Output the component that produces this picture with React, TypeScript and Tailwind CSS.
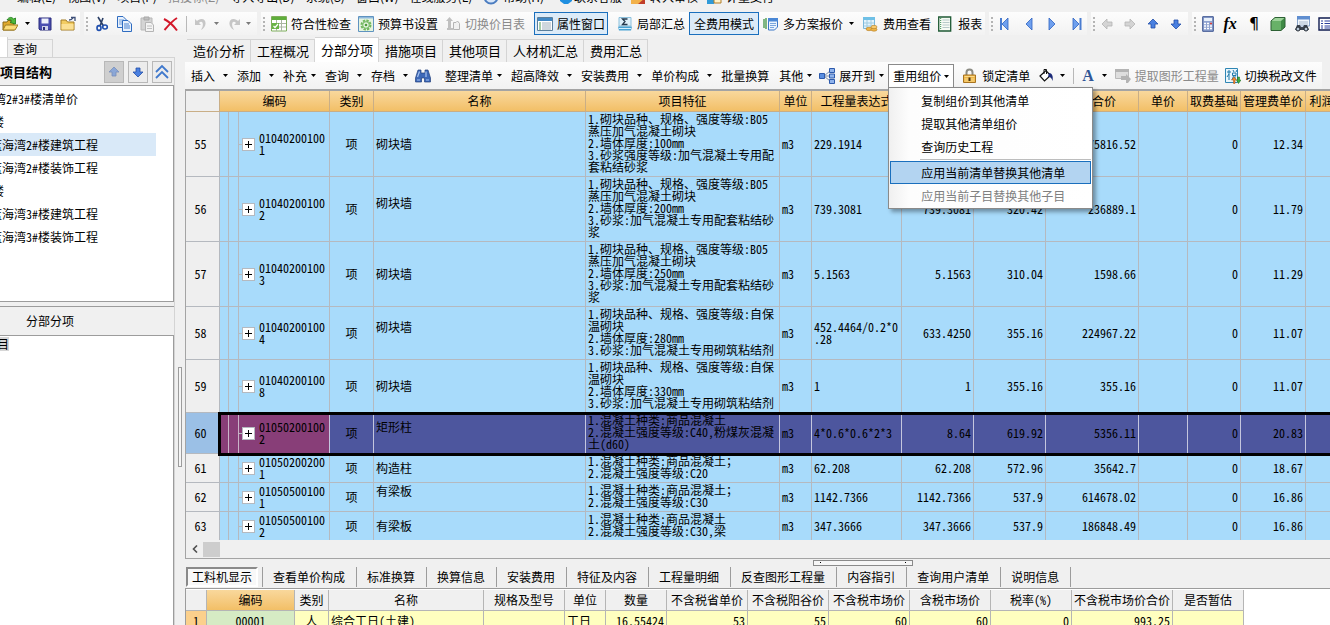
import type { ReactNode } from 'react';
import clsx from 'clsx';

// ---------- icons ----------

const Svg = ({ children, w = 16 }: { children: ReactNode; w?: number }) => (
  <svg width={w} height={16} viewBox={`0 0 ${w} 16`} className="shrink-0" fill="none" aria-hidden="true">
    {children}
  </svg>
);

const Caret = ({ dim = false }: { dim?: boolean }) => (
  <svg width="5" height="3" viewBox="0 0 5 3" className="shrink-0" aria-hidden="true">
    <path d="M0 0H5L2.500 3Z" fill={dim ? '#7a7a7a' : '#000'} />
  </svg>
);

const OpenIcon = () => (
  <Svg>
    <path d="M1 14V6H5L6 4.500H9V6H12V14Z" fill="#e0a92c" stroke="#8a6a18" />
    <path d="M1 14L3.500 9H16L13 14Z" fill="#fbdc78" stroke="#a07c20" />
    <path d="M5 4C6.500 1 10 0.500 11.500 3L13.500 2V8L8 6.500L9.800 5C9 3.500 7 3.500 5 4Z" fill="#4fb83c" stroke="#1d7a18" strokeWidth=".8" />
  </Svg>
);
const SaveIcon = () => (
  <Svg>
    <path d="M2 2H14V14H3L2 13Z" fill="#4a4fb0" stroke="#2a2c7c" />
    <path d="M4.500 2.500H11.500V7.500H4.500Z" fill="#eef1fa" />
    <path d="M5 10H11V14H5Z" fill="#cfd3e8" />
    <path d="M6 11H8V14H6Z" fill="#2a2c7c" />
  </Svg>
);
const FolderIcon = () => (
  <Svg>
    <path d="M1 14V4H6L7.500 6H14V14Z" fill="#f2cc62" stroke="#a37c26" />
    <path d="M1.500 8H13.500V13.500H1.500Z" fill="#fbe094" />
    <path d="M9 4C11 4 12 3.500 13 2M11 1.500H15V5" stroke="#3c4e78" strokeWidth="1.300" />
  </Svg>
);
const CutIcon = () => (
  <Svg>
    <path d="M4 1L9.500 10M9 2L6 10" stroke="#2b3f66" strokeWidth="1.600" />
    <ellipse cx="5" cy="12" rx="2" ry="2.400" stroke="#1f4fae" strokeWidth="1.600" />
    <ellipse cx="11" cy="11" rx="2.300" ry="2" stroke="#1f4fae" strokeWidth="1.600" />
  </Svg>
);
const CopyIcon = () => (
  <Svg>
    <path d="M.5 .5H6L9.500 4V11.500H.5Z" fill="#e8f1fc" stroke="#2f6cc0" />
    <path d="M2 4H7M2 6H7M2 8H7" stroke="#6e9ddb" />
    <path d="M5.500 4.500H11L14.500 8V15.500H5.500Z" fill="#e8f1fc" stroke="#2f6cc0" />
    <path d="M7 8H12M7 10H13M7 12H13" stroke="#4a83d0" />
  </Svg>
);
const PasteIcon = () => (
  <Svg>
    <path d="M1 2H12V14H1Z" fill="#d4d4d4" stroke="#b8b8b8" />
    <path d="M4 1H9V4H4Z" fill="#c0c0c0" stroke="#a8a8a8" />
    <path d="M5.500 6.500H11L13.500 9V15.500H5.500Z" fill="#f3f3f3" stroke="#b4b4b4" />
    <path d="M7 10H12M7 12.500H12" stroke="#c0c0c0" />
  </Svg>
);
const DeleteIcon = () => (
  <Svg>
    <path d="M1 3C5 5 10 9 14 14.500M14 2C9 5 5 10 1.500 14" stroke="#d3182a" strokeWidth="2" />
  </Svg>
);
const UndoIcon = () => (
  <Svg>
    <path d="M1 3V9H7L5 7C7 4.500 10 6 8.500 11L7 14C13 11 13 3 7.500 3C5.500 3 4 4 3 5Z" fill="#c6c6c6" />
  </Svg>
);
const RedoIcon = () => (
  <Svg>
    <path d="M14 3V9H8L10 7C8 4.500 5 6 6.500 11L8 14C2 11 2 3 7.500 3C9.500 3 11 4 12 5Z" fill="#c6c6c6" />
  </Svg>
);
const CheckGridIcon = () => (
  <Svg>
    <path d="M.5 .5H15.500V15H.5Z" fill="#fff" stroke="#7fae5c" />
    <path d="M1 1H15V4H1Z" fill="#5fae3c" />
    <path d="M5.500 4V15M10.500 4V15M1 7.500H15M1 11H15" stroke="#a9b5a2" />
    <path d="M1 7H8V13H1Z" fill="#69b345" />
    <path d="M2.500 10L4 11.500L7 8" stroke="#fff" strokeWidth="1.200" />
  </Svg>
);
const GearPageIcon = () => (
  <Svg>
    <path d="M.5 .5H15.500V15.500H.5Z" fill="#e4f3e0" stroke="#5f93c0" />
    <path d="M1 1H15V2.500H1Z" fill="#8fb8dc" />
    <circle cx="8" cy="9" r="4.500" stroke="#6fb65c" strokeWidth="2" strokeDasharray="2.400 1.100" />
    <circle cx="8" cy="9" r="3.300" stroke="#6fb65c" />
    <circle cx="8" cy="9" r="1.300" fill="#4e9c3c" />
  </Svg>
);
const SwitchIcon = () => (
  <Svg>
    <path d="M4.500 1L8 5H6V12H8V14H2V12H3V5H1Z" fill="#c0c0c0" />
    <path d="M8.500 6.500H11L12.500 5L14.500 7.500V13.500H8.500Z" fill="#f0f0f0" stroke="#b4b4b4" />
  </Svg>
);
const WindowIcon = () => (
  <Svg>
    <path d="M.5 1.500H15.500V14.500H.5Z" fill="#fff" stroke="#5a7f9c" />
    <path d="M1 2H15V5H1Z" fill="#3f87c4" />
    <path d="M2 7H4M2 9H4M2 11H4M2 13H4" stroke="#4f9c54" />
    <path d="M5 7H14M5 9H14M5 11H14M5 13H14" stroke="#9fb0bc" />
  </Svg>
);
const SumIcon = () => (
  <Svg>
    <path d="M2 1.500H14V10H2Z" fill="#dff0fa" stroke="#8cc0dc" />
    <path d="M10.500 3H5.500L8 5.500L5.500 8.500H10.500" stroke="#24384c" strokeWidth="1.300" />
    <path d="M1 10.500H15L14 14.500H2Z" fill="#4aa3d4" />
    <path d="M2 12.500H14" stroke="#d6f0ff" />
  </Svg>
);
const MultiIcon = () => (
  <Svg>
    <path d="M1 3V12M3 2V13" stroke="#4c9b52" strokeWidth="1.400" />
    <path d="M5.500 2.500H14.500V11L11.500 14H5.500Z" fill="#eaf3fd" stroke="#3b76c6" />
    <path d="M5 2H15V5.500H5Z" fill="#4b88d6" />
    <path d="M7 7.500H13M7 9.500H13M7 11.500H11" stroke="#79a6de" />
  </Svg>
);
const FeeIcon = () => (
  <Svg>
    <path d="M.5 1.500H11.500V12.500H.5Z" fill="#e3f3fc" stroke="#7cb9dc" />
    <path d="M0 1H12V4H0Z" fill="#6fc0e6" />
    <path d="M4 4V12M8 4V12M1 7H11M1 10H11" stroke="#9fcbe2" />
    <ellipse cx="6" cy="13" rx="3" ry="1.700" fill="#efb548" stroke="#b57c20" strokeWidth=".6" />
    <ellipse cx="11" cy="13.500" rx="3" ry="1.700" fill="#efb548" stroke="#b57c20" strokeWidth=".6" />
    <ellipse cx="11" cy="11" rx="3" ry="1.700" fill="#f7cb70" stroke="#b57c20" strokeWidth=".6" />
  </Svg>
);
const ReportIcon = () => (
  <Svg>
    <path d="M.7 1H12.700V15H.7Z" fill="#f6fbf4" stroke="#1f5a34" strokeWidth="1.300" />
    <path d="M2.700 2V14" stroke="#2f8a4a" strokeDasharray="1 1" />
    <path d="M4.500 4H11.500M4.500 6.500H11.500M4.500 9H11.500M4.500 11.500H11.500" stroke="#b7c9c9" />
  </Svg>
);
const NavIcon = ({ kind }: { kind: 'first' | 'prev' | 'next' | 'last' }) => (
  <Svg w={12}>
    {(kind === 'prev' || kind === 'first') && <path d="M9 2V14L3 8Z" fill="#6fa0ee" stroke="#2d62c0" strokeWidth=".8" />}
    {(kind === 'next' || kind === 'last') && <path d="M2 2V14L8 8Z" fill="#6fa0ee" stroke="#2d62c0" strokeWidth=".8" />}
    {kind === 'first' && <path d="M2 2V14" stroke="#4a7cd0" strokeWidth="2" />}
    {kind === 'last' && <path d="M9.500 2V14" stroke="#4a7cd0" strokeWidth="2" />}
  </Svg>
);
const arrowPaths = {
  left: 'M1 8L6 3V6H11V10H6V13Z',
  right: 'M11 8L6 3V6H1V10H6V13Z',
  up: 'M6 3L11 8H8V12H4V8H1Z',
  down: 'M6 13L11 8H8V4H4V8H1Z',
};
const ArrowIcon = ({ dir, dim = false }: { dir: keyof typeof arrowPaths; dim?: boolean }) => (
  <Svg w={12}>
    <path d={arrowPaths[dir]} fill={dim ? '#d4d4d4' : '#4a80e0'} stroke={dim ? '#b4b4b4' : '#234fa8'} strokeWidth=".8" />
  </Svg>
);
const CalcIcon = () => (
  <Svg w={12}>
    <path d="M.7 .7H11.300V15.300H.7Z" fill="#8fa3d0" stroke="#3d5490" />
    <path d="M2 2H10V5H2Z" fill="#e8f0fa" />
    <path d="M2 7.500H10M2 10H10M2 12.500H10" stroke="#fff" strokeWidth="1.400" strokeDasharray="2 1" />
    <path d="M8 7.500H10" stroke="#d8403a" strokeWidth="1.400" />
  </Svg>
);
const CubeIcon = () => (
  <Svg>
    <path d="M1 5L5 1.500H15V11L11 14.500H1Z" fill="#3f8a45" />
    <path d="M1 5L5 1.500H15L11 5Z" fill="#9ed39b" />
    <path d="M1 5H11V14.500H1Z" fill="#68b168" />
    <path d="M1 5L5 1.500H15V11L11 14.500H1Z" stroke="#2d6134" />
  </Svg>
);
const FindTableIcon = () => (
  <Svg>
    <path d="M3.500 .5H15.500V10H3.500Z" fill="#f2f6fb" stroke="#8aa4c8" />
    <path d="M3 0H16V3.500H3Z" fill="#5f8ed0" />
    <path d="M5 6H14M5 8H14" stroke="#a8b8cc" />
    <path d="M1 14L3 9H6L7 11H9L10 9H13L15 14Z" fill="#3c4450" />
    <circle cx="4" cy="13" r="2" fill="#b8c6d6" stroke="#20262e" />
    <circle cx="12" cy="13" r="2" fill="#b8c6d6" stroke="#20262e" />
  </Svg>
);
const ListIcon = () => (
  <Svg>
    <path d="M1 2H15V14H1Z" fill="#fff" stroke="#101c50" strokeWidth="1.400" />
    <path d="M3 5H5M3 7.500H5M3 10H5M3 12H5M6.500 5H14M6.500 7.500H14M6.500 10H14M6.500 12H14" stroke="#2a3f9c" />
  </Svg>
);
const BinocularsIcon = () => (
  <Svg>
    <path d="M3 2H6V5H10V2H13L15.500 10V14H9.500V10H6.500V14H.5V10Z" fill="#3d68b8" stroke="#24407c" strokeWidth=".7" />
    <path d="M2.500 9L4.500 3.500M11 9V3.500" stroke="#a8c4f0" strokeWidth="1.200" />
    <path d="M2 12H5M11 12H14" stroke="#a8c4f0" />
  </Svg>
);
const TreeIcon = () => (
  <Svg>
    <path d="M5 8L11 3M5 8L11 8M5 8L11 13" stroke="#7f8fa8" />
    <path d="M.5 5.500H5.500V10.500H.5Z" fill="#5a8ee0" stroke="#2d5aac" />
    <path d="M10.500 .5H15.500V4.500H10.500ZM10.500 6H15.500V10H10.500ZM10.500 11.500H15.500V15.500H10.500Z" fill="#8fb3ec" stroke="#2d5aac" />
  </Svg>
);
const LockIcon = () => (
  <Svg>
    <path d="M4.500 8V4.500C4.500 0.500 10.500 0.500 10.500 4.500V8" stroke="#8c8c84" strokeWidth="2" />
    <path d="M1.500 7H13.500V14.500H1.500Z" fill="#eeb548" stroke="#a87420" />
    <path d="M2.500 8.500H12.500M2.500 11H12.500M2.500 13H12.500" stroke="#fbdc8c" />
    <path d="M6.500 9.500H8.500V13H6.500Z" fill="#4c3510" />
  </Svg>
);
const BucketIcon = () => (
  <Svg>
    <path d="M2 8L8 2.500L12.500 7.500L6.500 13Z" fill="#fff" stroke="#111" strokeWidth="1.200" />
    <path d="M6 6V1.500H8.500V6" stroke="#111" />
    <path d="M11 5C14 5 15.500 8 14.500 13C13.500 10 13 9 10 9Z" fill="#1c2a78" />
  </Svg>
);
const ExtractIcon = () => (
  <Svg>
    <path d="M.5 1.500H13.500V10.500H.5Z" fill="#dedede" stroke="#bababa" />
    <path d="M0 1H14V4H0Z" fill="#b4b4b4" />
    <path d="M6 8H11V6L16 11L13 15H11V12H6Z" fill="#b4b4b4" />
  </Svg>
);
const TaxIcon = () => (
  <Svg>
    <path d="M.5 .5H12.500V14.500H.5Z" fill="#eaf6fc" stroke="#2f86b4" />
    <path d="M2 4H6M4 2V12M4 6L2 9M8 2L9 4M12 2L11 4M7.500 5H11V7.500H7.500ZM8.500 8L7 12M10 8V11" stroke="#1f78a8" />
    <path d="M8.500 15.500V12H6.500L9 9L11.500 12H10V15.500Z" fill="#f08a2c" stroke="#a8480c" strokeWidth=".5" />
    <path d="M12.500 9H14.500V12H16L13.500 15.500L11.500 12H12.500Z" fill="#3cae3c" stroke="#186418" strokeWidth=".5" />
  </Svg>
);
const ChevronsUp = () => (
  <Svg>
    <path d="M2 8L8 2L14 8M2 14L8 8L14 14" stroke="#3f78cc" strokeWidth="1.800" />
  </Svg>
);

// ---------- toolbar bits ----------

const strip = 'flex items-center bg-linear-to-b from-[#fdfdfd] to-[#f2f2f2]';

const Grip = () => (
  <span className="mx-[2px] flex shrink-0 flex-col gap-[2px]">
    {[0, 1, 2, 3].map(n => <i key={n} className="h-[2px] w-[2px] bg-[#b4b4b4]" />)}
  </span>
);

const Sep = () => <span className="h-4 w-px shrink-0 bg-[#b8b8b8]" />;

type ToolProps = { icon?: ReactNode; label: string; active?: boolean; disabled?: boolean; caret?: boolean };

const Tool = ({ icon, label, active, disabled, caret }: ToolProps) => (
  <button
    type="button"
    disabled={disabled}
    className={clsx(
      'flex h-[23px] shrink-0 items-center gap-1 border',
      icon ? 'px-[2px]' : 'px-1',
      active ? 'border-[#1a6fbd] bg-[#dcebf8]' : 'border-transparent',
      disabled && 'text-[#8a8a8a]',
    )}
  >
    {icon}
    <span>{label}</span>
    {caret && <span className="px-[2px]"><Caret /></span>}
  </button>
);

const IconBtn = ({ title, children, disabled }: { title: string; children: ReactNode; disabled?: boolean }) => (
  <button type="button" title={title} aria-label={title} disabled={disabled} className="flex shrink-0 items-center">
    {children}
  </button>
);

const MenuTool = ({ label, wide }: { label: string; wide?: boolean }) => (
  <button type="button" className={clsx('flex shrink-0 items-center pr-[9px]', wide ? 'gap-2' : 'gap-1')}>
    {label}
    <Caret />
  </button>
);

// ---------- data ----------

const menus = ['编辑(E)', '视图(V)', '项目(P)', '招投标(Z)', '导入导出(D)', '系统(S)', '窗口(W)', '在线服务(L)'];

type Item = {
  no: number; code: string; name: string; raised?: boolean; spec: string;
  expr: string; qty: string; price: string; total: string; fee: string;
};

const items: Item[] = [
  { no: 55, code: '010402001001', name: '砌块墙', spec: '1.砌块品种、规格、强度等级:B05\n蒸压加气混凝土砌块\n2.墙体厚度:100mm\n3.砂浆强度等级:加气混凝土专用配\n套粘结砂浆', expr: '229.1914', qty: '229.1914', price: '330.8', total: '75816.52', fee: '12.34' },
  { no: 56, code: '010402001002', name: '砌块墙', raised: true, spec: '1.砌块品种、规格、强度等级:B05\n蒸压加气混凝土砌块\n2.墙体厚度:200mm\n3.砂浆:加气混凝土专用配套粘结砂\n浆', expr: '739.3081', qty: '739.3081', price: '320.42', total: '236889.1', fee: '11.79' },
  { no: 57, code: '010402001003', name: '砌块墙', spec: '1.砌块品种、规格、强度等级:B05\n蒸压加气混凝土砌块\n2.墙体厚度:250mm\n3.砂浆:加气混凝土专用配套粘结砂\n浆', expr: '5.1563', qty: '5.1563', price: '310.04', total: '1598.66', fee: '11.29' },
  { no: 58, code: '010402001004', name: '砌块墙', raised: true, spec: '1.砌块品种、规格、强度等级:自保\n温砌块\n2.墙体厚度:280mm\n3.砂浆:加气混凝土专用砌筑粘结剂', expr: '452.4464/0.2*0\n.28', qty: '633.4250', price: '355.16', total: '224967.22', fee: '11.07' },
  { no: 59, code: '010402001008', name: '砌块墙', spec: '1.砌块品种、规格、强度等级:自保\n温砌块\n2.墙体厚度:330mm\n3.砂浆:加气混凝土专用砌筑粘结剂', expr: '1', qty: '1', price: '355.16', total: '355.16', fee: '11.07' },
  { no: 60, code: '010502001002', name: '矩形柱', raised: true, spec: '1.混凝土种类:商品混凝土\n2.混凝土强度等级:C40,粉煤灰混凝\n土(d60)', expr: '4*0.6*0.6*2*3', qty: '8.64', price: '619.92', total: '5356.11', fee: '20.83' },
  { no: 61, code: '010502002001', name: '构造柱', spec: '1.混凝土种类:商品混凝土；\n2.混凝土强度等级:C20', expr: '62.208', qty: '62.208', price: '572.96', total: '35642.7', fee: '18.67' },
  { no: 62, code: '010505001001', name: '有梁板', raised: true, spec: '1.混凝土种类:商品混凝土；\n2.混凝土强度等级:C30', expr: '1142.7366', qty: '1142.7366', price: '537.9', total: '614678.02', fee: '16.86' },
  { no: 63, code: '010505001002', name: '有梁板', spec: '1.混凝土种类:商品混凝土\n2.混凝土强度等级:C30，梁', expr: '347.3666', qty: '347.3666', price: '537.9', total: '186848.49', fee: '16.86' },
];

const gridCols = [
  { label: '', w: 34 }, { label: '编码', w: 110 }, { label: '类别', w: 44 }, { label: '名称', w: 212 },
  { label: '项目特征', w: 194 }, { label: '单位', w: 32 }, { label: '工程量表达式', w: 90 }, { label: '工程量', w: 72 },
  { label: '综合单价', w: 72 }, { label: '综合合价', w: 93 }, { label: '单价', w: 49 }, { label: '取费基础', w: 53 },
  { label: '管理费单价', w: 65 }, { label: '利润单价', w: 56 },
];

const detailCols = [
  { label: '', w: 21, v: '1' }, { label: '编码', w: 88, v: '00001' }, { label: '类别', w: 34, v: '人' },
  { label: '名称', w: 155, v: '综合工日(土建)' }, { label: '规格及型号', w: 81, v: '' }, { label: '单位', w: 41, v: '工日' },
  { label: '数量', w: 61, v: '16.55424' }, { label: '不含税省单价', w: 81, v: '53' }, { label: '不含税阳谷价', w: 81, v: '55' },
  { label: '不含税市场价', w: 81, v: '60' }, { label: '含税市场价', w: 81, v: '60' }, { label: '税率(%)', w: 81, v: '0' },
  { label: '不含税市场价合价', w: 101, v: '993.25' }, { label: '是否暂估', w: 71, v: '' },
];

const mainTabs = ['造价分析', '工程概况', '分部分项', '措施项目', '其他项目', '人材机汇总', '费用汇总'];
const detailTabs = ['工料机显示', '查看单价构成', '标准换算', '换算信息', '安装费用', '特征及内容', '工程量明细', '反查图形工程量', '内容指引', '查询用户清单', '说明信息'];

// the tree is scrolled sideways, so every label is cut at its left end
const tree = [
  { label: '蓝海湾2#3#楼清单价', w: 'w-[78px]' },
  { label: '2#楼', w: 'w-[4px]' },
  { label: '蓝海湾2#楼建筑工程', w: 'w-[98px]', selected: true },
  { label: '蓝海湾2#楼装饰工程', w: 'w-[98px]' },
  { label: '3#楼', w: 'w-[4px]' },
  { label: '蓝海湾3#楼建筑工程', w: 'w-[98px]' },
  { label: '蓝海湾3#楼装饰工程', w: 'w-[98px]' },
];

// ---------- page parts ----------

const MenuBar = () => (
  <nav className="flex h-3 shrink-0 items-end overflow-hidden pb-[7px] pl-[17px] leading-4 whitespace-nowrap [font-feature-settings:normal]">
    {menus.map(m => (
      <a key={m} href="#" className={clsx('mr-[11px] shrink-0', m.startsWith('招') && 'text-[#8a8a8a]')}>{m}</a>
    ))}
    <a href="#" className="mr-[14px] flex shrink-0 gap-1">
      <Svg><circle cx="8" cy="8" r="6.500" fill="#d8e6f8" stroke="#4a7cc0" strokeWidth="2" /></Svg>帮助(H)
    </a>
    <a href="#" className="mr-2 flex shrink-0">
      <Svg><path d="M2 4H14V12L10 15H6L2 12Z" fill="#1f8fe0" /></Svg>联系客服
    </a>
    <a href="#" className="mr-2 flex shrink-0 gap-1">
      <Svg><path d="M1 4H15V15H1Z" fill="#f2b14a" /><path d="M8 15L15 9V15Z" fill="#c03c28" /></Svg>转入审核
    </a>
    <a href="#" className="flex shrink-0 gap-1">
      <Svg><path d="M1 4H8V15H1Z" fill="#2f9ad8" /><path d="M8 8H15V14H8Z" fill="#fff2c8" stroke="#b07c28" /></Svg>计量支付
    </a>
  </nav>
);

const TopToolbar = () => (
  <div className="flex h-[23px] shrink-0 gap-1 overflow-hidden whitespace-nowrap">
    <div className={clsx(strip, 'shrink-0 gap-[7px] pr-1 pl-[2px]')}>
      <button type="button" title="打开" className="flex items-center gap-[7px]"><OpenIcon /><Caret /></button>
      <IconBtn title="保存"><SaveIcon /></IconBtn>
      <IconBtn title="关闭工程"><FolderIcon /></IconBtn>
    </div>
    <div className={clsx(strip, 'shrink-0 gap-1 pr-[6px]')}>
      <Grip />
      <span className="flex items-center gap-[7px]">
        <IconBtn title="剪切"><CutIcon /></IconBtn>
        <IconBtn title="复制"><CopyIcon /></IconBtn>
        <IconBtn title="粘贴" disabled><PasteIcon /></IconBtn>
        <IconBtn title="删除"><DeleteIcon /></IconBtn>
        <Sep />
        <button type="button" title="撤销" disabled className="flex items-center gap-1"><UndoIcon /><Caret dim /></button>
        <button type="button" title="恢复" disabled className="flex items-center gap-1"><RedoIcon /><Caret dim /></button>
      </span>
    </div>
    <div className={clsx(strip, 'shrink-0 gap-px')}>
      <Grip />
      <Tool icon={<CheckGridIcon />} label="符合性检查" />
      <Tool icon={<GearPageIcon />} label="预算书设置" />
      <Tool icon={<SwitchIcon />} label="切换价目表" disabled />
      <span className="px-[2px]"><Sep /></span>
      <Tool icon={<WindowIcon />} label="属性窗口" active />
      <span className="px-[2px]"><Sep /></span>
      <Tool icon={<SumIcon />} label="局部汇总" />
      <Tool label="全费用模式" active />
      <Tool icon={<MultiIcon />} label="多方案报价" caret />
      <Tool icon={<FeeIcon />} label="费用查看" />
      <Tool icon={<ReportIcon />} label="报表" />
    </div>
    <div className={clsx(strip, 'shrink-0 gap-1 pr-1')}>
      <Grip />
      <span className="flex gap-3">
        <IconBtn title="第一条"><NavIcon kind="first" /></IconBtn>
        <IconBtn title="上一条"><NavIcon kind="prev" /></IconBtn>
        <IconBtn title="下一条"><NavIcon kind="next" /></IconBtn>
        <IconBtn title="最后一条"><NavIcon kind="last" /></IconBtn>
      </span>
    </div>
    <div className={clsx(strip, 'shrink-0 gap-1 pr-[6px]')}>
      <Grip />
      <span className="flex gap-[11px]">
        <IconBtn title="升级" disabled><ArrowIcon dir="left" dim /></IconBtn>
        <IconBtn title="降级" disabled><ArrowIcon dir="right" dim /></IconBtn>
        <IconBtn title="上移"><ArrowIcon dir="up" /></IconBtn>
        <IconBtn title="下移"><ArrowIcon dir="down" /></IconBtn>
      </span>
    </div>
    <div className={clsx(strip, 'flex-1 gap-1')}>
      <Grip />
      <span className="flex shrink-0 items-center gap-2">
        <IconBtn title="计算器"><CalcIcon /></IconBtn>
        <button type="button" title="函数" className="w-4 font-['Liberation_Serif',serif] text-base leading-4 font-bold italic">fx</button>
        <button type="button" title="段落" className="w-4 font-['DejaVu_Sans',sans-serif] text-base leading-4">¶</button>
        <IconBtn title="模型"><CubeIcon /></IconBtn>
        <IconBtn title="查找"><FindTableIcon /></IconBtn>
        <IconBtn title="列表"><ListIcon /></IconBtn>
      </span>
    </div>
  </div>
);

const squareBtn = 'flex h-[22px] w-5 items-center justify-center border border-[#b8b8b8]';

const Sidebar = () => (
  <aside className="flex w-[175px] shrink-0 flex-col overflow-hidden">
    <div className="flex h-5 shrink-0 items-end">
      <button type="button" aria-label="项目" className="h-5 w-2 border-r border-[#d4d4d4] bg-white" />
      <button type="button" className="h-[18px] w-[45px] border-t border-r border-[#d4d4d4] px-[5px] text-left leading-4">查询</button>
    </div>
    <div className="flex min-h-0 flex-1 flex-col border-t border-r border-[#d4d4d4]">
      <div className="flex h-[27px] shrink-0 items-center gap-1 bg-[#f0f0f0] pr-[2px]">
        <h2 className="mr-auto text-[13px] leading-5 font-bold">项目结构</h2>
        <button type="button" aria-label="上移" disabled className={clsx(squareBtn, 'bg-[#cfcfcf]')}>
          <span className="opacity-50"><ArrowIcon dir="up" /></span>
        </button>
        <button type="button" aria-label="下移" className={clsx(squareBtn, 'bg-[#ececec]')}><ArrowIcon dir="down" /></button>
        <button type="button" aria-label="收起" className={clsx(squareBtn, 'bg-[#ececec]')}><ChevronsUp /></button>
      </div>
      <ul className="h-[217px] shrink-0 border-y border-r border-[#9c9c9c] bg-white pt-px">
        {tree.map(t => (
          <li key={t.label} className={clsx('h-[23px] w-[156px]', t.selected && 'bg-[#d9e9f8]')}>
            <a href="#" className={clsx('flex h-[23px] items-center justify-end whitespace-nowrap', t.w)}>{t.label}</a>
          </li>
        ))}
      </ul>
      <div className="mt-1 flex h-[29px] shrink-0 items-center border-t border-[#9c9c9c] pl-[26px]">分部分项</div>
      <div className="flex-1 border-t border-r border-[#9c9c9c] bg-white pt-px">
        <span className="flex h-[14px] w-[9px] items-center justify-end overflow-hidden bg-[#d6d6d6] whitespace-nowrap">整个项目</span>
      </div>
    </div>
  </aside>
);

const ReuseMenu = () => {
  const row = 'flex h-[23px] w-full items-center border border-transparent pl-[30px]';
  return (
    <div role="menu" className="absolute top-full -left-px z-20 w-[205px] border border-[#8a8a8a] bg-linear-to-r from-[#f0f0f0] via-[#fdfdfd] via-10% to-white p-px shadow-[3px_3px_4px_rgba(0,0,0,0.35)]">
      <button type="button" role="menuitem" className={row}>复制组价到其他清单</button>
      <button type="button" role="menuitem" className={row}>提取其他清单组价</button>
      <button type="button" role="menuitem" className={row}>查询历史工程</button>
      <hr className="my-px ml-[30px] border-[#bdbdbd]" />
      <button type="button" role="menuitem" className="flex h-[23px] w-full items-center border border-[#1a6fbd] bg-[#b3d4f1] pl-[30px]">应用当前清单替换其他清单</button>
      <button type="button" role="menuitem" disabled className={clsx(row, 'text-[#808080]')}>应用当前子目替换其他子目</button>
    </div>
  );
};

const GridToolbar = () => (
  <div className={clsx(strip, 'mr-2 h-[27px] shrink-0 pl-[6px] whitespace-nowrap')}>
    <MenuTool label="插入" wide />
    <MenuTool label="添加" wide />
    <MenuTool label="补充" />
    <MenuTool label="查询" wide />
    <button type="button" className="mr-[7px] flex shrink-0 items-center gap-2">存档<Caret /></button>
    <IconBtn title="查找"><BinocularsIcon /></IconBtn>
    <span className="px-[7px]"><Sep /></span>
    <MenuTool label="整理清单" />
    <MenuTool label="超高降效" wide />
    <MenuTool label="安装费用" wide />
    <MenuTool label="单价构成" wide />
    <button type="button" className="mr-[10px] shrink-0">批量换算</button>
    <button type="button" className="mr-[7px] flex shrink-0 items-center gap-1">其他<Caret /></button>
    <button type="button" className="mr-1 flex shrink-0 items-center gap-1">
      <TreeIcon />展开到<Caret />
    </button>
    <div className="relative flex h-[23px] shrink-0 border border-b-0 border-[#8a8a8a] bg-white">
      <button type="button" aria-haspopup="menu" aria-expanded="true" className="flex items-center gap-[3px] px-1">
        重用组价<Caret />
      </button>
      <ReuseMenu />
    </div>
    <span className="px-1"><Sep /></span>
    <button type="button" className="mr-2 flex shrink-0 items-center gap-1"><LockIcon />锁定清单</button>
    <button type="button" title="填充颜色" className="flex shrink-0 items-center gap-[6px] pr-2"><BucketIcon /><Caret /></button>
    <Sep />
    <button type="button" title="字体" className="flex shrink-0 items-center gap-2 px-2">
      <span className="font-['Liberation_Serif',serif] text-base leading-4 font-bold text-[#2f5596]">A</span>
      <Caret />
    </button>
    <button type="button" disabled className="mr-[6px] flex shrink-0 items-center gap-1 text-[#8a8a8a]"><ExtractIcon />提取图形工程量</button>
    <button type="button" className="flex shrink-0 items-center gap-1"><TaxIcon />切换税改文件</button>
  </div>
);

const CodeCell = ({ code, selected }: { code: string; selected: boolean }) => (
  <div className="flex h-full items-stretch">
    <i className={clsx('w-[9px] shrink-0 border-r', selected ? 'border-[#c9b3c8]' : 'border-[#b5b9bf]')} />
    <i className={clsx('w-[10px] shrink-0 border-r', selected ? 'border-[#c9b3c8]' : 'border-[#b5b9bf]')} />
    <span className="flex items-center">
      <i className="h-px w-[3px] bg-[#b5b9bf]" />
      <button type="button" aria-label="展开" className="flex h-[13px] w-[13px] items-center justify-center border border-[#b5b9bf] bg-white">
        <svg width="7" height="7" viewBox="0 0 7 7"><path d="M0 3.500H7M3.500 0V7" stroke="#000" /></svg>
      </button>
      <span className="ml-1 w-[70px] pb-px break-all">{code}</span>
    </span>
  </div>
);

const Grid = () => (
  <div className="min-h-0 flex-1 overflow-hidden border-t-2 border-l border-[#a4a4a4]">
    <table className="w-[1176px] table-fixed border-separate border-spacing-0 leading-3">
      <colgroup>{gridCols.map((c, n) => <col key={n} style={{ width: c.w }} />)}</colgroup>
      <thead>
        <tr className="h-[21px]">
          {gridCols.map((c, n) => (
            <th key={n} className={clsx('border-r border-b border-[#c9ae86] p-0 font-normal whitespace-nowrap', n ? 'bg-linear-to-b from-[#f9d89c] to-[#f2bf66]' : 'bg-[#efefef]')}>
              {c.label}
            </th>
          ))}
        </tr>
      </thead>
      <tbody>
        {items.map(r => {
          const sel = r.no === 60;
          const cell = clsx('border-r border-b px-[2px] pt-0 pb-px', sel ? 'border-[#c4c6de] bg-[#4d569e]' : 'border-[#b5b9bf] bg-[#a8dbfb]');
          const num = clsx(cell, 'text-right');
          return (
            <tr key={r.no}>
              <th className={clsx('border-r border-b border-[#b5b9bf] pt-0 pr-1 pb-px pl-0 font-normal', sel ? 'bg-[#9bc0e6]' : 'bg-[#efefef]')}>{r.no}</th>
              <td className={clsx('relative h-px border-r border-b p-0', sel ? 'border-[#c4c6de] bg-[#883e78]' : 'border-[#b5b9bf] bg-[#a8dbfb]')}>
                <CodeCell code={r.code} selected={sel} />
                {sel && <div className="pointer-events-none absolute -top-px -bottom-[3px] -left-[2px] z-10 w-[1145px] border-[3px] border-black" />}
              </td>
              <td className={clsx(cell, 'text-center')}>项</td>
              <td className={cell}><div className={clsx(r.raised && 'pb-3')}>{r.name}</div></td>
              <td className={cell}><div className="pt-px pb-[2px] whitespace-pre">{r.spec}</div></td>
              <td className={cell}>m3</td>
              <td className={clsx(cell, 'whitespace-pre')}>{r.expr}</td>
              <td className={num}>{r.qty}</td>
              <td className={num}>{r.price}</td>
              <td className={num}>{r.total}</td>
              <td className={num} />
              <td className={num}>0</td>
              <td className={num}>{r.fee}</td>
              <td className={num} />
            </tr>
          );
        })}
      </tbody>
    </table>
  </div>
);

const DetailPane = () => (
  <section className="h-[66px] shrink-0 overflow-hidden">
    <div className="flex h-[7px] items-center justify-center pl-[210px]">
      <span className="flex h-[6px] w-[100px] items-center justify-between border border-[#8a8a8a] bg-[#f6f6f6] px-[6px]">
        <i className="h-px w-px bg-black" />
        <i className="h-px w-px bg-black" />
      </span>
    </div>
    <div role="tablist" className="flex h-[22px] items-center whitespace-nowrap">
      {detailTabs.map((t, n) => n === 0 ? (
        <span key={t} className="border-r border-[#9c9c9c] pr-1 pl-px">
          <button type="button" role="tab" aria-selected="true" className="h-5 border-2 border-[#8a8a8a] border-r-white border-b-white bg-[#f8f8f8] px-1">{t}</button>
        </span>
      ) : (
        <button key={t} type="button" role="tab" className="h-5 border-r border-[#9c9c9c] pr-[11px] pl-[10px]">{t}</button>
      ))}
    </div>
    <div className="border-t border-l border-[#9c9c9c] bg-white pt-px">
      <table className="w-[1058px] table-fixed border-separate border-spacing-0 leading-3">
        <colgroup>{detailCols.map((c, n) => <col key={n} style={{ width: c.w }} />)}</colgroup>
        <thead>
          <tr className="h-[21px]">
            {detailCols.map((c, n) => (
              <th key={n} className={clsx('border-r border-b border-[#b5b5b5] p-0 font-normal whitespace-nowrap', n === 1 ? 'bg-linear-to-b from-[#f9d89c] to-[#f2bf66]' : 'bg-[#f0f0f0]')}>
                {c.label}
              </th>
            ))}
          </tr>
        </thead>
        <tbody>
          <tr className="h-5">
            {detailCols.map((c, n) => (
              <td
                key={n}
                className={clsx(
                  'border-r border-b border-[#b5b5b5] px-[2px] py-0 whitespace-nowrap',
                  n === 0 ? 'bg-[#fbd08c]' : n === 1 ? 'bg-[#d6ebc4]' : 'bg-[#ffffbf]',
                  n < 3 ? 'text-center' : n > 5 && 'text-right',
                )}
              >
                {c.v}
              </td>
            ))}
          </tr>
        </tbody>
      </table>
    </div>
  </section>
);

export default function App() {
  return (
    <div className="flex h-screen flex-col overflow-hidden bg-[#f0f0f0] font-['Noto_Sans_CJK_SC',sans-serif] text-[12px] leading-4 text-black [font-feature-settings:'hwid']">
      <MenuBar />
      <TopToolbar />
      <div className="mt-[2px] flex min-h-0 flex-1">
        <Sidebar />
        <div className="flex w-[10px] shrink-0 justify-center pt-[330px]">
          <span className="h-[100px] w-1 border border-[#9c9c9c] bg-[#f6f6f6]" />
        </div>
        <main className="flex min-w-0 flex-1 flex-col">
          <div role="tablist" className="flex h-[25px] shrink-0 items-end pl-[2px] text-[13px] whitespace-nowrap">
            {mainTabs.map(t => (
              <button
                key={t}
                type="button"
                role="tab"
                aria-selected={t === '分部分项'}
                className={clsx('border-t border-r border-[#d4d4d4] pr-[5px] pl-[6px]', t === '分部分项' ? 'h-[25px] bg-white' : 'h-[23px]')}
              >
                {t}
              </button>
            ))}
          </div>
          <GridToolbar />
          <Grid />
          <div className="flex h-[19px] shrink-0 items-center border-b border-l border-[#a4a4a4]">
            <button type="button" aria-label="向左滚动" className="flex w-[17px] justify-center">
              <svg width="6" height="8" viewBox="0 0 6 8" fill="none"><path d="M5 .5L1.500 4L5 7.500" stroke="#505050" strokeWidth="1.600" /></svg>
            </button>
            <span className="h-[15px] w-[17px] bg-[#cdcdcd]" />
          </div>
          <DetailPane />
        </main>
      </div>
    </div>
  );
}
